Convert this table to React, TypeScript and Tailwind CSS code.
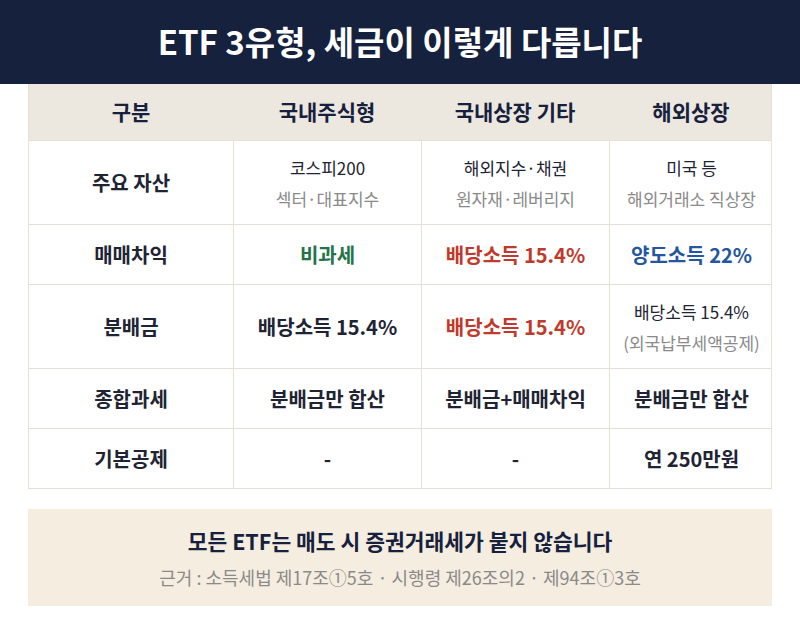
import React from "react";

type Cell = { main: React.ReactNode; sub?: string; tone?: string; weight?: string };

const rows: { label: string; h: string; cells: Cell[] }[] = [
  {
    label: "주요 자산",
    h: "h-[84px]",
    cells: [
      { main: "코스피200", sub: "섹터·대표지수", weight: "font-normal" },
      { main: "해외지수·채권", sub: "원자재·레버리지", weight: "font-normal" },
      { main: "미국 등", sub: "해외거래소 직상장", weight: "font-normal" },
    ],
  },
  {
    label: "매매차익",
    h: "h-[60px]",
    cells: [
      { main: "비과세", tone: "text-[#23744a]" },
      { main: "배당소득 15.4%", tone: "text-[#c0392b]" },
      { main: "양도소득 22%", tone: "text-[#24579f]" },
    ],
  },
  {
    label: "분배금",
    h: "h-[84px]",
    cells: [
      { main: "배당소득 15.4%" },
      { main: "배당소득 15.4%", tone: "text-[#c0392b]" },
      { main: "배당소득 15.4%", sub: "(외국납부세액공제)", weight: "font-normal" },
    ],
  },
  {
    label: "종합과세",
    h: "h-[60px]",
    cells: [{ main: "분배금만 합산" }, { main: "분배금+매매차익" }, { main: "분배금만 합산" }],
  },
  {
    label: "기본공제",
    h: "h-[60px]",
    cells: [{ main: "-" }, { main: "-" }, { main: "연 250만원" }],
  },
];

const cols = "grid grid-cols-[204px_188px_188px_164px]";

export default function App() {
  return (
    <div
      className="w-[800px] h-[632px] bg-white"
      style={{ fontFamily: '"Noto Sans CJK KR", "Noto Sans", sans-serif' }}
    >
      {/* 제목 */}
      <header className="h-[84px] bg-[#16213e] flex items-center justify-center">
        <h1 className="text-white text-[33px] font-bold">ETF 3유형, 세금이 이렇게 다릅니다</h1>
      </header>

      {/* 비교표 */}
      <div className="mx-[28px] border-x border-b border-[#e6dfd4]">
        <div className={`${cols} h-[56px] bg-[#ede8df] text-[#16213e] text-[21px] font-bold`}>
          {["구분", "국내주식형", "국내상장 기타", "해외상장"].map((t) => (
            <div key={t} className="flex items-center justify-center">
              {t}
            </div>
          ))}
        </div>
        {rows.map((r) => (
          <div key={r.label} className={`${cols} ${r.h} border-t border-[#e6dfd4]`}>
            <div className="flex items-center justify-center text-[20px] font-bold text-[#1e2433]">
              {r.label}
            </div>
            {r.cells.map((c, i) => (
              <div
                key={i}
                className="flex flex-col items-center justify-center border-l border-[#e6dfd4] leading-[31px]"
              >
                <span
                  className={`${c.sub ? "text-[17px]" : "text-[20px]"} ${c.weight ?? "font-bold"} ${c.tone ?? "text-[#1e2433]"}`}
                >
                  {c.main}
                </span>
                {c.sub && <span className="text-[17px] text-[#8a8a8a]">{c.sub}</span>}
              </div>
            ))}
          </div>
        ))}
      </div>

      {/* 안내 박스 */}
      <div className="mx-[28px] mt-[20px] h-[97px] bg-[#f5eddf] flex flex-col items-center justify-center gap-[12px]">
        <p className="text-[21.5px] font-bold text-[#16213e] leading-[26px]">모든 ETF는 매도 시 증권거래세가 붙지 않습니다</p>
        <p className="text-[18px] text-[#8a8a8a] leading-[22px]">근거 : 소득세법 제17조①5호 · 시행령 제26조의2 · 제94조①3호</p>
      </div>
    </div>
  );
}
